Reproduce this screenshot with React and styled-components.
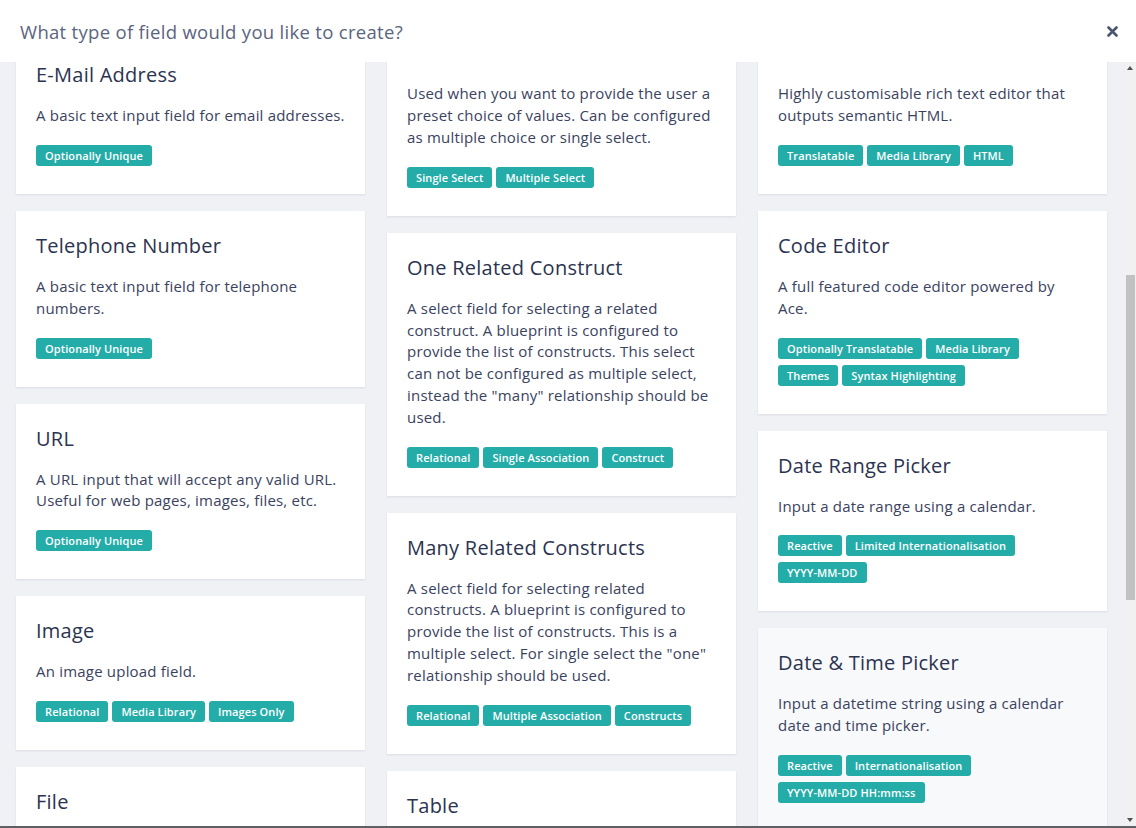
import React, { useLayoutEffect, useRef } from "react";
import styled, { createGlobalStyle } from "styled-components";

const GlobalStyle = createGlobalStyle`
  html, body { margin: 0; padding: 0; height: 100%; }
  body { font-family: "Open Sans", "Liberation Sans", sans-serif; background: #fff; }
  * { box-sizing: border-box; }
`;

const Modal = styled.div`
  height: 828px;
  display: flex;
  flex-direction: column;
  background: #fff;
  border-bottom: 2px solid #5f6063;
`;

const Header = styled.header`
  height: 62px;
  flex: none;
  display: flex;
  align-items: center;
  justify-content: space-between;
  padding: 0 18px 0 20px;
  background: #fff;
`;

const Heading = styled.h2`
  margin: 0;
  font-size: 18.5px;
  font-weight: 400;
  color: #5b6480;
  letter-spacing: 0.3px;
`;

const CloseButton = styled.button`
  border: 0;
  background: none;
  padding: 0;
  width: 12px;
  height: 12px;
  display: flex;
  align-items: center;
  justify-content: center;
  cursor: pointer;
  color: #4b5572;
`;

const BodyWrap = styled.div`
  position: relative;
  flex: 1;
  min-height: 0;
`;

const Body = styled.div`
  position: relative;
  height: 100%;
  overflow-y: scroll;
  background: #f0f1f5;
  padding: 16px 29px 16px 16px;
  scrollbar-width: none;
  &::-webkit-scrollbar { display: none; }
`;

const ScrollTrack = styled.div`
  position: absolute;
  top: 0;
  right: 0;
  bottom: 0;
  width: 12px;
  background: #f1f1f1;
`;

const ScrollArrow = styled.div`
  position: absolute;
  left: 3px;
  ${(p) => (p.$down ? "bottom: 4px;" : "top: 4px;")}
  width: 0;
  height: 0;
  border-left: 3.5px solid transparent;
  border-right: 3.5px solid transparent;
  ${(p) => (p.$down ? "border-top: 4px solid #505050;" : "border-bottom: 4px solid #505050;")}
`;

const ScrollThumb = styled.div`
  position: absolute;
  top: 213px;
  left: 2px;
  right: 1px;
  height: 325px;
  background: #c1c1c1;
`;

const Columns = styled.div`
  display: grid;
  grid-template-columns: repeat(3, 349px);
  column-gap: 22px;
  align-items: start;
`;

const Column = styled.div`
  display: flex;
  flex-direction: column;
  gap: 17px;
`;

const Card = styled.div`
  background: ${(p) => (p.$active ? "#f8f9fb" : "#fff")};
  box-shadow: 0 1px 2px rgba(30, 40, 70, 0.1);
  padding: 20px 20px 28px;
  cursor: pointer;
`;

const Title = styled.h3`
  margin: 0 0 15px;
  font-size: 20px;
  line-height: 30px;
  font-weight: 400;
  letter-spacing: 0.25px;
  color: #2b3350;
`;

const Desc = styled.p`
  margin: 0 0 18px;
  font-size: 15px;
  line-height: 21.8px;
  letter-spacing: 0.2px;
  color: #3a4260;
`;

const Tags = styled.div`
  display: flex;
  flex-wrap: wrap;
  gap: 6px 4px;
  padding-right: 8px;
`;

const Tag = styled.span`
  display: inline-block;
  height: 21px;
  line-height: 21px;
  padding: 0 9px;
  border-radius: 3px;
  background: #24aca8;
  color: #fff;
  font-size: 11px;
  font-weight: 600;
  letter-spacing: 0.1px;
  white-space: nowrap;
`;

const columns = [
  [
    { title: "Text", desc: "A basic single line text input field for short strings and labels.", tags: ["Optionally Unique", "Translatable"] },
    { title: "Textarea", desc: "A multi-line text input field for longer passages of plain text.", tags: ["Translatable"] },
    { title: "E-Mail Address", desc: "A basic text input field for email addresses.", tags: ["Optionally Unique"], anchor: true },
    { title: "Telephone Number", desc: "A basic text input field for telephone numbers.", tags: ["Optionally Unique"] },
    { title: "URL", desc: "A URL input that will accept any valid URL. Useful for web pages, images, files, etc.", tags: ["Optionally Unique"] },
    { title: "Image", desc: "An image upload field.", tags: ["Relational", "Media Library", "Images Only"] },
    { title: "File", desc: "A file upload field for documents, archives and other assets.", tags: ["Relational", "Media Library"] },
    { title: "Colour Picker", desc: "Select a colour using a visual picker.", tags: ["Reactive", "HEX"] },
  ],
  [
    { title: "Number", desc: "A numeric input field supporting integers and decimal values.", tags: ["Optionally Unique"] },
    { title: "Boolean", desc: "A simple on/off toggle switch.", tags: ["Reactive"] },
    { title: "Select", desc: "Used when you want to provide the user a preset choice of values. Can be configured as multiple choice or single select.", tags: ["Single Select", "Multiple Select"] },
    { title: "One Related Construct", desc: "A select field for selecting a related construct. A blueprint is configured to provide the list of constructs. This select can not be configured as multiple select, instead the \"many\" relationship should be used.", tags: ["Relational", "Single Association", "Construct"] },
    { title: "Many Related Constructs", desc: "A select field for selecting related constructs. A blueprint is configured to provide the list of constructs. This is a multiple select. For single select the \"one\" relationship should be used.", tags: ["Relational", "Multiple Association", "Constructs"] },
    { title: "Table", desc: "A repeatable table of rows and columns for structured data.", tags: ["Translatable"] },
  ],
  [
    { title: "Markdown", desc: "A plain text editor with live markdown preview and formatting.", tags: ["Translatable"] },
    { title: "Slug", desc: "A URL friendly slug field.", tags: ["Optionally Unique"] },
    { title: "Rich Text Editor", desc: "Highly customisable rich text editor that outputs semantic HTML.", tags: ["Translatable", "Media Library", "HTML"] },
    { title: "Code Editor", desc: "A full featured code editor powered by Ace.", tags: ["Optionally Translatable", "Media Library", "Themes", "Syntax Highlighting"] },
    { title: "Date Range Picker", desc: "Input a date range using a calendar.", tags: ["Reactive", "Limited Internationalisation", "YYYY-MM-DD"] },
    { title: "Date & Time Picker", desc: "Input a datetime string using a calendar date and time picker.", tags: ["Reactive", "Internationalisation", "YYYY-MM-DD HH:mm:ss"], active: true },
    { title: "Time Picker", desc: "Input a time using a clock picker.", tags: ["Reactive", "HH:mm:ss"] },
  ],
];

export default function App() {
  const bodyRef = useRef(null);
  const anchorRef = useRef(null);

  useLayoutEffect(() => {
    if (bodyRef.current && anchorRef.current) {
      bodyRef.current.scrollTop = anchorRef.current.offsetTop + 22;
    }
  }, []);

  return (
    <>
      <GlobalStyle />
      <Modal>
        <Header>
          <Heading>What type of field would you like to create?</Heading>
          <CloseButton aria-label="Close">
            <svg width="11" height="11" viewBox="0 0 11 11">
              <path d="M1.5 1.5 L9.5 9.5 M9.5 1.5 L1.5 9.5" stroke="currentColor" strokeWidth="2.6" strokeLinecap="round" />
            </svg>
          </CloseButton>
        </Header>
        <BodyWrap>
          <Body ref={bodyRef}>
            <Columns>
              {columns.map((col, ci) => (
                <Column key={ci}>
                  {col.map((f) => (
                    <Card key={f.title} $active={f.active} ref={f.anchor ? anchorRef : undefined}>
                      <Title>{f.title}</Title>
                      <Desc>{f.desc}</Desc>
                      <Tags>
                        {f.tags.map((t) => (
                          <Tag key={t}>{t}</Tag>
                        ))}
                      </Tags>
                    </Card>
                  ))}
                </Column>
              ))}
            </Columns>
          </Body>
          <ScrollTrack aria-hidden="true">
            <ScrollArrow />
            <ScrollThumb />
            <ScrollArrow $down />
          </ScrollTrack>
        </BodyWrap>
      </Modal>
    </>
  );
}
